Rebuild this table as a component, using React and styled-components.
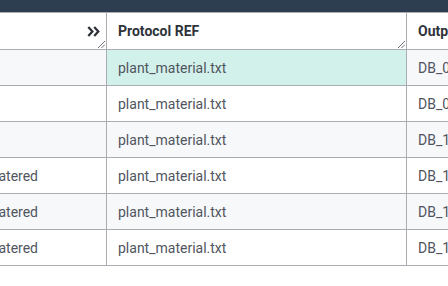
import React from "react";
import styled, { createGlobalStyle } from "styled-components";

const GlobalStyle = createGlobalStyle`
  html, body {
    margin: 0;
    padding: 0;
    background: #ffffff;
    overflow: hidden;
    font-family: Roboto, "Liberation Sans", sans-serif;
  }
`;

const Page = styled.div`
  width: 448px;
  height: 286px;
  overflow: hidden;
  background: #ffffff;
`;

const TopBar = styled.div`
  height: 12px;
  background: #2c3e50;
`;

const Viewport = styled.div`
  width: 448px;
  overflow: hidden;
`;

const Grid = styled.div`
  display: flex;
  flex-direction: column;
  width: max-content;
  margin-left: -53px;
`;

const COLS = "160px 300px 220px";

const HeaderRow = styled.div`
  display: grid;
  grid-template-columns: ${COLS};
  border-top: 1px solid #a9acb0;
  border-bottom: 1px solid #a9acb0;
`;

const HeaderCell = styled.div`
  position: relative;
  height: 36px;
  box-sizing: border-box;
  display: flex;
  align-items: center;
  justify-content: ${(p) => (p.$end ? "flex-end" : "flex-start")};
  padding: 0 ${(p) => (p.$end ? "6px" : "0")} 0 11px;
  border-right: 1px solid #a9acb0;
  font-size: 14px;
  font-weight: 700;
  color: #2f333a;
  white-space: nowrap;
  overflow: hidden;
`;

const Row = styled.div`
  display: grid;
  grid-template-columns: ${COLS};
  border-bottom: 1px solid #a9acb0;
  background: ${(p) => (p.$striped ? "#f7f8fa" : "#ffffff")};
`;

const Cell = styled.div`
  height: 35px;
  box-sizing: border-box;
  display: flex;
  align-items: center;
  padding-left: 11px;
  border-right: 1px solid #a9acb0;
  font-size: 14px;
  color: #50555e;
  white-space: nowrap;
  overflow: hidden;
  background: ${(p) => (p.$selected ? "#d3f1eb" : "transparent")};
`;

const Handle = styled.svg`
  position: absolute;
  right: 1px;
  bottom: 1px;
  width: 8px;
  height: 8px;
`;

const ResizeHandle = () => (
  <Handle viewBox="0 0 8 8">
    <path d="M1 8 L8 1 M4.5 8 L8 4.5" stroke="#5c6068" strokeWidth="0.9" fill="none" />
  </Handle>
);

const ExpandIcon = () => (
  <svg width="13" height="11" viewBox="0 0 13 11">
    <path
      d="M1.3 1 L5.4 5.5 L1.3 10 M7.2 1 L11.3 5.5 L7.2 10"
      stroke="#2f333a"
      strokeWidth="2.3"
      fill="none"
    />
  </svg>
);

const rows = [
  { cond: "Dry", out: "DB_0012.csv" },
  { cond: "Dry", out: "DB_0013.csv" },
  { cond: "Dry", out: "DB_1014.csv" },
  { cond: "Well watered", out: "DB_1015.csv" },
  { cond: "Well watered", out: "DB_1016.csv" },
  { cond: "Well watered", out: "DB_1017.csv" },
];

export default function App() {
  return (
    <>
      <GlobalStyle />
      <Page>
        <TopBar />
        <Viewport>
          <Grid>
            <HeaderRow>
              <HeaderCell $end>
                <ExpandIcon />
                <ResizeHandle />
              </HeaderCell>
              <HeaderCell>
                Protocol REF
                <ResizeHandle />
              </HeaderCell>
              <HeaderCell>
                Output Data File
                <ResizeHandle />
              </HeaderCell>
            </HeaderRow>
            {rows.map((r, i) => (
              <Row key={i} $striped={i % 2 === 0}>
                <Cell>{r.cond}</Cell>
                <Cell $selected={i === 0}>plant_material.txt</Cell>
                <Cell>{r.out}</Cell>
              </Row>
            ))}
          </Grid>
        </Viewport>
      </Page>
    </>
  );
}
